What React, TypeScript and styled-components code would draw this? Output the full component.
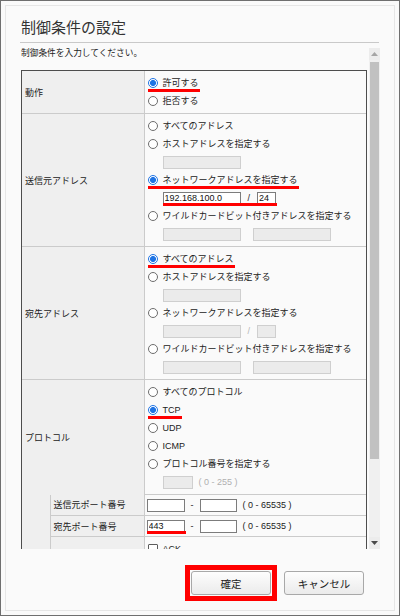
import React from 'react'
import styled, { createGlobalStyle } from 'styled-components'

const GlobalStyle = createGlobalStyle`
  html, body { margin: 0; padding: 0; background: #fff; }
  body { font-family: 'Liberation Sans', 'Noto Sans CJK JP', sans-serif; }
  * { box-sizing: border-box; }
`

const Dialog = styled.div`
  width: 400px;
  height: 616px;
  border: 1px solid #6f6f6f;
  padding: 4px;
  background: #fafafa;
`

const Inner = styled.div`
  height: 100%;
  border: 1px solid #e6e6e6;
  display: flex;
  flex-direction: column;
`

const Header = styled.h1`
  margin: 0 15px 0 14px;
  padding: 11px 0 5px 1px;
  border-bottom: 1px solid #c9c9c9;
  font: 400 15px/20px 'Noto Sans CJK JP', sans-serif;
  color: #333;
`

const Panel = styled.div`
  display: flex;
  height: 501px;
  margin: 5px 14px 0 14px;
`

const Content = styled.div`
  flex: 1;
  overflow: hidden;
  padding-left: 1px;
`

const Lead = styled.p`
  margin: 0;
  height: 22px;
  font-size: 8.7px;
  line-height: 11px;
  color: #222;
`

const Frame = styled.div`
  width: 346px;
  border: 1px solid #4d4d4d;
  border-bottom: none;
`

const Table = styled.table`
  width: 100%;
  border-collapse: collapse;
  border-style: hidden;
  table-layout: fixed;
  font-size: 9px;
  color: #222;
`

const Col = styled.col<{ $w?: number }>`
  width: ${p => (p.$w ? `${p.$w}px` : 'auto')};
`

const Label = styled.th<{ $open?: boolean }>`
  background: #efefef;
  border: 1px solid #cbcbcb;
  ${p => p.$open && 'border-bottom-style: hidden;'}
  padding: 0 0 0 3px;
  text-align: left;
  font-weight: 400;
  vertical-align: middle;
  white-space: nowrap;
`

const Cell = styled.td<{ $tight?: boolean }>`
  background: #fafafa;
  border: 1px solid #cbcbcb;
  padding: ${p => (p.$tight ? '3px 2px' : '3px 3px 3px')};
  vertical-align: top;
`

const Line = styled.div<{ $indent?: boolean }>`
  display: flex;
  align-items: center;
  height: 18px;
  padding-left: ${p => (p.$indent ? '15px' : '0')};
`

const Row = styled.div`
  display: flex;
  align-items: center;
  height: 14px;
`

const Mark = styled.span<{ $on?: boolean; $drop?: number }>`
  position: relative;
  display: inline-flex;
  align-items: center;
  height: 12px;
  line-height: 12px;
  white-space: nowrap;
  &::after {
    content: '';
    display: ${p => (p.$on ? 'block' : 'none')};
    position: absolute;
    left: 0;
    right: -1px;
    top: calc(100% + ${p => p.$drop ?? 0}px);
    height: 3px;
    background: #f00;
  }
`

const Radio = styled.input`
  appearance: none;
  flex: none;
  width: 10px;
  height: 10px;
  margin: 0 5px 0 0;
  border-radius: 50%;
  border: 1px solid #6d6d6d;
  background: #fff;
  &:checked {
    border-color: #1f74e4;
    background: radial-gradient(circle, #1f74e4 0 2.7px, #fff 3.3px);
  }
`

const Check = styled.input`
  appearance: none;
  flex: none;
  width: 10px;
  height: 10px;
  margin: 0 5px 0 0;
  border: 1px solid #5c5c5c;
  border-radius: 1px;
  background: #fff;
`

const Field = styled.input<{ $w: number }>`
  width: ${p => p.$w}px;
  height: 13px;
  margin: 0;
  padding: 0 1px;
  border: 1px solid #7c7c7c;
  background: #fff;
  font: 9px 'Liberation Sans', sans-serif;
  color: #111;
  &:disabled {
    background: #ebebeb;
    border-color: #cfcfcf;
  }
`

const Sep = styled.span<{ $off?: boolean; $gap: number }>`
  margin: 0 ${p => p.$gap}px;
  color: ${p => (p.$off ? '#b5b5b5' : '#222')};
`

const Hint = styled.span<{ $off?: boolean }>`
  margin-left: 6px;
  color: ${p => (p.$off ? '#b0b0b0' : '#222')};
  white-space: nowrap;
`

const ScrollBar = styled.div`
  width: 11px;
  display: flex;
  flex-direction: column;
  background: #f0f0f0;
`

const ScrollButton = styled.div`
  height: 12px;
  display: flex;
  align-items: center;
  justify-content: center;
  background: #ececec;
`

const Track = styled.div`
  flex: 1;
  padding: 2px 1px 0;
`

const Thumb = styled.div`
  height: 397px;
  background: #c1c1c1;
`

const Footer = styled.div`
  display: flex;
  justify-content: flex-end;
  align-items: center;
  gap: 7px;
  padding: 16px 30px 0 0;
`

const Highlight = styled.span`
  display: inline-flex;
  padding: 1px;
  border: 5px solid #f00;
`

const Button = styled.button`
  width: 80px;
  height: 24px;
  padding: 0;
  border: 1px solid #a8a8a8;
  border-radius: 3px;
  background: linear-gradient(#fdfdfd, #ebebeb);
  font: 10.5px 'Noto Sans CJK JP', sans-serif;
  color: #222;
`

const Arrow = ({ down, color }: { down?: boolean; color: string }) => (
  <svg width="7" height="4" viewBox="0 0 7 4">
    <path d={down ? 'M0 0H7L3.5 4Z' : 'M0 4H7L3.5 0Z'} fill={color} />
  </svg>
)

type ChoiceProps = { group: string; on?: boolean; mark?: boolean; children: React.ReactNode }

const Choice = ({ group, on, mark, children }: ChoiceProps) => (
  <Line>
    <Mark $on={mark}>
      <Radio type="radio" name={group} defaultChecked={on} />
      <span>{children}</span>
    </Mark>
  </Line>
)

const AddressChoices = ({ group, pick, mark, net }: { group: string; pick: number; mark: boolean; net?: [string, string] }) => (
  <>
    <Choice group={group} on={pick === 0} mark={mark && pick === 0}>すべてのアドレス</Choice>
    <Choice group={group} on={pick === 1}>ホストアドレスを指定する</Choice>
    <Line $indent>
      <Field $w={78} disabled />
    </Line>
    <Choice group={group} on={pick === 2} mark={mark && pick === 2}>ネットワークアドレスを指定する</Choice>
    <Line $indent>
      <Mark $on={!!net} $drop={-1}>
        <Field $w={78} disabled={!net} readOnly defaultValue={net?.[0]} />
        <Sep $gap={7} $off={!net}>/</Sep>
        <Field $w={19} disabled={!net} readOnly defaultValue={net?.[1]} />
      </Mark>
    </Line>
    <Choice group={group} on={pick === 3}>ワイルドカードビット付きアドレスを指定する</Choice>
    <Line $indent>
      <Field $w={78} disabled />
      <Sep $gap={6} />
      <Field $w={78} disabled />
    </Line>
  </>
)

const PortRange = ({ from, mark }: { from?: string; mark?: boolean }) => (
  <Row>
    <Mark $on={mark} $drop={-1}>
      <Field $w={38} readOnly defaultValue={from} />
    </Mark>
    <Sep $gap={6}>-</Sep>
    <Field $w={37} readOnly />
    <Hint>( 0 - 65535 )</Hint>
  </Row>
)

export default function App() {
  return (
    <>
      <GlobalStyle />
      <Dialog>
        <Inner>
          <Header>制御条件の設定</Header>
          <Panel>
            <Content>
              <Lead>制御条件を入力してください。</Lead>
              <Frame>
                <Table>
                  <colgroup>
                    <Col $w={28} />
                    <Col $w={94} />
                    <Col />
                  </colgroup>
                  <tbody>
                    <tr>
                      <Label colSpan={2}>動作</Label>
                      <Cell>
                        <Choice group="action" on mark>許可する</Choice>
                        <Choice group="action">拒否する</Choice>
                      </Cell>
                    </tr>
                    <tr>
                      <Label colSpan={2}>送信元アドレス</Label>
                      <Cell>
                        <AddressChoices group="src" pick={2} mark net={['192.168.100.0', '24']} />
                      </Cell>
                    </tr>
                    <tr>
                      <Label colSpan={2}>宛先アドレス</Label>
                      <Cell>
                        <AddressChoices group="dst" pick={0} mark />
                      </Cell>
                    </tr>
                    <tr>
                      <Label colSpan={2} $open>プロトコル</Label>
                      <Cell>
                        <Choice group="proto">すべてのプロトコル</Choice>
                        <Choice group="proto" on mark>TCP</Choice>
                        <Choice group="proto">UDP</Choice>
                        <Choice group="proto">ICMP</Choice>
                        <Choice group="proto">プロトコル番号を指定する</Choice>
                        <Line $indent>
                          <Field $w={30} disabled />
                          <Hint $off>( 0 - 255 )</Hint>
                        </Line>
                      </Cell>
                    </tr>
                    <tr>
                      <Label rowSpan={3} />
                      <Label>送信元ポート番号</Label>
                      <Cell $tight>
                        <PortRange />
                      </Cell>
                    </tr>
                    <tr>
                      <Label>宛先ポート番号</Label>
                      <Cell $tight>
                        <PortRange from="443" mark />
                      </Cell>
                    </tr>
                    <tr>
                      <Label />
                      <Cell>
                        <Line>
                          <Check type="checkbox" />
                          <span>ACK</span>
                        </Line>
                      </Cell>
                    </tr>
                  </tbody>
                </Table>
              </Frame>
            </Content>
            <ScrollBar>
              <ScrollButton>
                <Arrow color="#a5a5a5" />
              </ScrollButton>
              <Track>
                <Thumb />
              </Track>
              <ScrollButton>
                <Arrow down color="#4a4a4a" />
              </ScrollButton>
            </ScrollBar>
          </Panel>
          <Footer>
            <Highlight>
              <Button>確定</Button>
            </Highlight>
            <Button>キャンセル</Button>
          </Footer>
        </Inner>
      </Dialog>
    </>
  )
}
